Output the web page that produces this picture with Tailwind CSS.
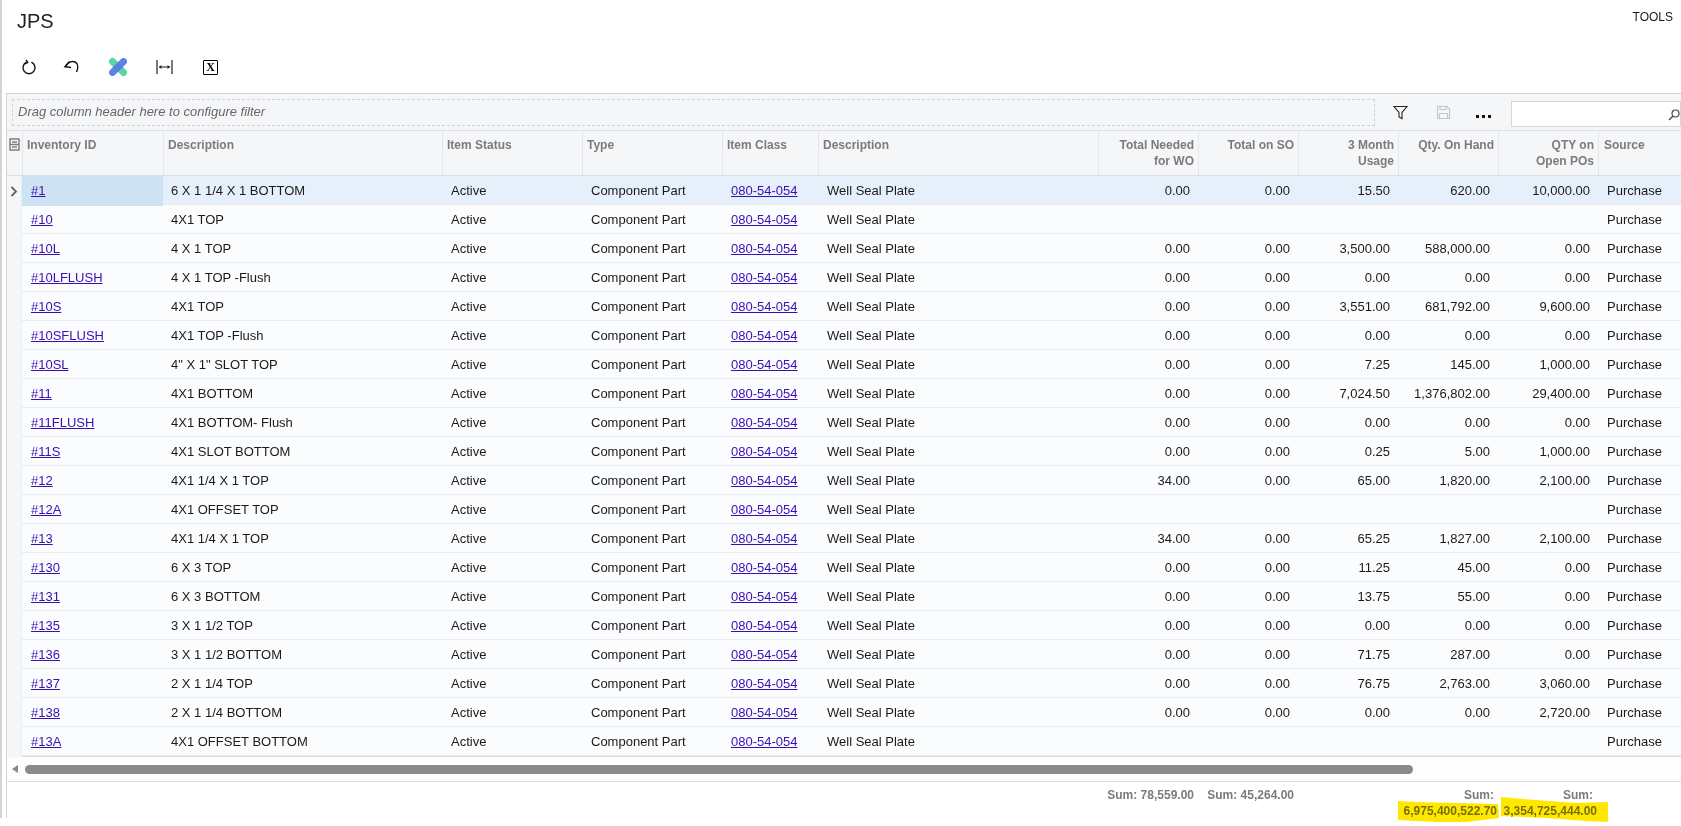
<!DOCTYPE html>
<html lang="en">
<head>
    <meta charset="UTF-8">
    <title>JPS</title>
    <script src="https://cdn.jsdelivr.net/npm/@tailwindcss/browser@4"></script>
</head>
<body class="h-[826px] overflow-hidden bg-white">
    <div class="relative h-[818px] w-[1681px] border-l-2 border-[#d4d4d4] font-['Liberation_Sans',Arial,sans-serif] text-[13px] text-[#1a1a1a]">
        <!-- title -->
        <header class="flex h-[45px] justify-between pl-[15px]">
            <h1 class="pt-[9px] text-[20px] leading-6 text-[#222]">JPS</h1>
            <span class="pt-[10px] pr-[8px] text-[12px] leading-[14px]">TOOLS</span>
        </header>

        <!-- toolbar -->
        <div class="flex h-[48px] items-center pb-[4px] pl-[19px]">
            <svg class="h-[16px] w-[16px]" viewBox="0 0 16 16" fill="none" stroke="#111" stroke-width="1.4"><path d="M5.6 3.2a6 6 0 1 0 4.8 0"/><path d="M5 0.8l1.8 2.6-2.8 1.4" stroke-linejoin="round"/></svg>
            <svg class="ml-[26px] h-[16px] w-[17px]" viewBox="0 0 17 16" fill="none" stroke="#111" stroke-width="1.5"><path d="M6.500 2.500L2 7.800l6 .8"/><path d="M2.500 7.200C5 3.500 9 1.800 12 3c3.200 1.500 3.400 5.800 1.500 10"/></svg>
            <svg class="ml-[27px] h-[22px] w-[22px]" viewBox="0 0 22 22">
                <path d="M5.500 5.500L16.500 16.500" stroke="#55d7a8" stroke-width="7" stroke-linecap="round"/>
                <path d="M5.500 16.500L16.500 5.500" stroke="#5578e8" stroke-width="7" stroke-linecap="round" opacity="0.92"/>
            </svg>
            <svg class="ml-[27px] h-[16px] w-[17px]" viewBox="0 0 17 16" fill="none" stroke="#222" stroke-width="1.2"><path d="M1 1v14M16 1v14M3 8h11"/><path d="M5.500 6L3 8l2.500 2zM11.500 6L14 8l-2.500 2z" fill="#222" stroke="none"/></svg>
            <span class="ml-[30px] flex h-[15px] w-[15px] items-center justify-center rounded-[1px] border-[1.5px] border-black font-['Liberation_Serif',serif] text-[12px] font-bold leading-none text-black">X</span>
        </div>

        <!-- grid -->
        <div class="ml-[4px] h-[725px] border-t border-l border-[#d4d4d4]">
            <div class="flex h-[37px] items-center border-b border-[#dcdfe3] bg-[#f5f6f8]">
                <div class="ml-[5px] flex h-[27px] w-[1363px] items-center border border-dashed border-[#cfd2d6] pl-[5px] text-[13px] italic text-[#666]">Drag column header here to configure filter</div>
                <svg class="ml-[18px] h-[15px] w-[15px]" viewBox="0 0 15 15" fill="none" stroke="#222" stroke-width="1.1"><path d="M1 1.500h13L9 7.500v6l-3-1.500V7.500z"/></svg>
                <svg class="ml-[28px] h-[15px] w-[15px]" viewBox="0 0 15 15" fill="none" stroke="#c2c5c9" stroke-width="1.1"><path d="M1.500 1.500h9.500l2.500 2.500v9.500h-12z"/><path d="M4 1.500v3h6v-3M3.500 13.500v-5h8v5"/></svg>
                <span class="ml-[25px] flex gap-[3px] pt-[9px]"><i class="h-[3px] w-[3px] bg-[#111]"></i><i class="h-[3px] w-[3px] bg-[#111]"></i><i class="h-[3px] w-[3px] bg-[#111]"></i></span>
                <div class="relative mt-[4px] ml-[20px] h-[26px] flex-1 border border-[#d4d7db] bg-white">
                    <svg class="absolute top-[7px] right-[0px] h-[12px] w-[12px]" viewBox="0 0 12 12" fill="none" stroke="#444" stroke-width="1.2"><circle cx="7.500" cy="4.500" r="3.500"/><path d="M5 7L1 11"/></svg>
                </div>
            </div>

            <div id="gridHead" class="grid h-[45px] grid-cols-[15px_141px_279px_140px_140px_96px_280px_100px_100px_100px_100px_100px_84px] border-b border-[#dcdfe3] bg-[#f5f6f8] text-[12px] leading-[16px] font-bold text-[#7b7b7b]">
                <div class="pt-[7px] pl-[2px]">
                    <svg class="h-[13px] w-[11px]" viewBox="0 0 11 13" fill="none" stroke="#808080" stroke-width="1.500"><path d="M1 1h9v11H1zM3 4h5M1 6.500h9M3 9h5"/></svg>
                </div>
                <div class="border-l border-[#e4e6e9] px-[4px] pt-[6px]">Inventory ID</div>
                <div class="border-l border-[#e4e6e9] px-[4px] pt-[6px]">Description</div>
                <div class="border-l border-[#e4e6e9] px-[4px] pt-[6px]">Item Status</div>
                <div class="border-l border-[#e4e6e9] px-[4px] pt-[6px]">Type</div>
                <div class="border-l border-[#e4e6e9] px-[4px] pt-[6px]">Item Class</div>
                <div class="border-l border-[#e4e6e9] px-[4px] pt-[6px]">Description</div>
                <div class="border-l border-[#e4e6e9] px-[4px] pt-[6px] text-right">Total Needed<br>for WO</div>
                <div class="border-l border-[#e4e6e9] px-[4px] pt-[6px] text-right">Total on SO</div>
                <div class="border-l border-[#e4e6e9] px-[4px] pt-[6px] text-right">3 Month<br>Usage</div>
                <div class="border-l border-[#e4e6e9] px-[4px] pt-[6px] text-right">Qty. On Hand</div>
                <div class="border-l border-[#e4e6e9] px-[4px] pt-[6px] text-right">QTY on<br>Open POs</div>
                <div class="border-l border-[#e4e6e9] px-[5px] pt-[6px]">Source</div>
            </div>

            <div id="gridBody"></div>

            <!-- scrollbar -->
            <div class="flex h-[26px] items-center border-y border-[#dcdfe3] bg-[#fdfdfe]">
                <span class="ml-[5px] h-0 w-0 border-y-[4px] border-r-[6px] border-y-transparent border-r-[#888]"></span>
                <span class="ml-[7px] h-[9px] w-[1388px] rounded-full bg-[#8a8a8a]"></span>
            </div>

            <!-- totals -->
            <div class="grid grid-cols-[15px_141px_279px_140px_140px_96px_280px_100px_100px_100px_100px_100px_84px] pt-[5px] text-[12px] leading-[16px] font-bold text-[#7b7b7b]">
                <div class="col-start-8 pr-[4px] text-right">Sum: 78,559.00</div>
                <div class="pr-[4px] text-right">Sum: 45,264.00</div>
                <div class="col-start-11 pr-[4px] text-right">Sum:<br><span class="-mr-[3px]">6,975,400,522.70</span></div>
                <div class="pr-[5px] text-right">Sum:<br><span class="-mr-[4px]">3,354,725,444.00</span></div>
            </div>
        </div>

        <!-- highlighter marks drawn over the totals -->
        <svg class="pointer-events-none absolute top-[794px] left-[1394px] mix-blend-multiply" width="220" height="32" viewBox="0 0 220 32" fill="#ffe800">
            <path d="M2 7L20 8L60 9L102 10L103 24L70 28L40 28L2 26z"/>
            <path d="M105 3L140 6L180 9L212 8L212 28L190 27L150 24L105 22z"/>
        </svg>
    </div>

    <script>
        const rows = [
            ['#1', '6 X 1 1/4 X 1 BOTTOM', '0.00', '0.00', '15.50', '620.00', '10,000.00'],
            ['#10', '4X1 TOP', '', '', '', '', ''],
            ['#10L', '4 X 1 TOP', '0.00', '0.00', '3,500.00', '588,000.00', '0.00'],
            ['#10LFLUSH', '4 X 1 TOP -Flush', '0.00', '0.00', '0.00', '0.00', '0.00'],
            ['#10S', '4X1 TOP', '0.00', '0.00', '3,551.00', '681,792.00', '9,600.00'],
            ['#10SFLUSH', '4X1 TOP -Flush', '0.00', '0.00', '0.00', '0.00', '0.00'],
            ['#10SL', '4" X 1" SLOT TOP', '0.00', '0.00', '7.25', '145.00', '1,000.00'],
            ['#11', '4X1 BOTTOM', '0.00', '0.00', '7,024.50', '1,376,802.00', '29,400.00'],
            ['#11FLUSH', '4X1 BOTTOM- Flush', '0.00', '0.00', '0.00', '0.00', '0.00'],
            ['#11S', '4X1 SLOT BOTTOM', '0.00', '0.00', '0.25', '5.00', '1,000.00'],
            ['#12', '4X1 1/4 X 1 TOP', '34.00', '0.00', '65.00', '1,820.00', '2,100.00'],
            ['#12A', '4X1 OFFSET TOP', '', '', '', '', ''],
            ['#13', '4X1 1/4 X 1 TOP', '34.00', '0.00', '65.25', '1,827.00', '2,100.00'],
            ['#130', '6 X 3 TOP', '0.00', '0.00', '11.25', '45.00', '0.00'],
            ['#131', '6 X 3 BOTTOM', '0.00', '0.00', '13.75', '55.00', '0.00'],
            ['#135', '3 X 1 1/2 TOP', '0.00', '0.00', '0.00', '0.00', '0.00'],
            ['#136', '3 X 1 1/2 BOTTOM', '0.00', '0.00', '71.75', '287.00', '0.00'],
            ['#137', '2 X 1 1/4 TOP', '0.00', '0.00', '76.75', '2,763.00', '3,060.00'],
            ['#138', '2 X 1 1/4 BOTTOM', '0.00', '0.00', '0.00', '0.00', '2,720.00'],
            ['#13A', '4X1 OFFSET BOTTOM', '', '', '', '', '']
        ];

        const linkCls = 'text-[#3a0fb5] underline';
        const numCls = 'pr-[8px] text-right';
        document.getElementById('gridBody').innerHTML = rows.map(function (r, i) {
            const selected = i === 0;
            const rowCls = selected ? 'bg-[#e6f0fa]' : 'bg-[#fbfcfe]';
            const idCls = selected ? 'bg-[#cde2f3]' : '';
            const arrow = selected ? '<svg class="h-[11px] w-[8px]" viewBox="0 0 8 11" fill="none" stroke="#666" stroke-width="1.800"><path d="M1.500 1l4.500 4.500L1.500 10"/></svg>' : '';
            return '<div class="grid h-[29px] grid-cols-[15px_141px_279px_140px_140px_96px_280px_100px_100px_100px_100px_100px_84px] items-stretch border-b border-[#e9edf1] leading-[30px] ' + rowCls + '">' +
                '<div class="flex items-center justify-center border-r border-[#e9edf1] bg-[#f5f6f8]">' + arrow + '</div>' +
                '<div class="pl-[9px] ' + idCls + '"><a href="#" class="' + linkCls + '">' + r[0] + '</a></div>' +
                '<div class="pl-[8px]">' + r[1] + '</div>' +
                '<div class="pl-[9px]">Active</div>' +
                '<div class="pl-[9px]">Component Part</div>' +
                '<div class="pl-[9px]"><a href="#" class="' + linkCls + '">080-54-054</a></div>' +
                '<div class="pl-[9px]">Well Seal Plate</div>' +
                '<div class="' + numCls + '">' + r[2] + '</div>' +
                '<div class="' + numCls + '">' + r[3] + '</div>' +
                '<div class="' + numCls + '">' + r[4] + '</div>' +
                '<div class="' + numCls + '">' + r[5] + '</div>' +
                '<div class="' + numCls + '">' + r[6] + '</div>' +
                '<div class="pl-[9px]">Purchase</div>' +
                '</div>';
        }).join('');
    </script>
</body>
</html>
